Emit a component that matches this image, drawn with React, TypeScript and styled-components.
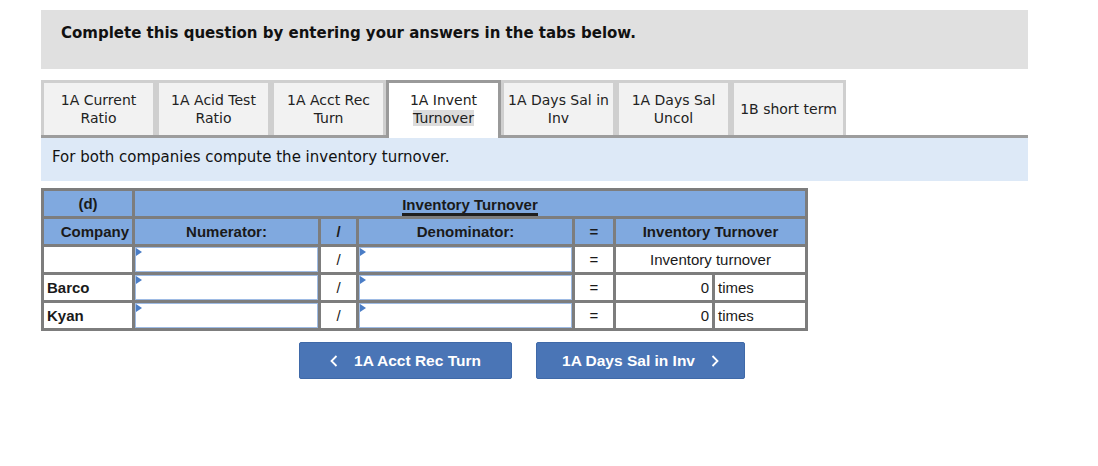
import { createGlobalStyle, styled } from "styled-components";

const GlobalStyle = createGlobalStyle`
  body {
    margin: 0;
    background: #ffffff;
    font-family: "DejaVu Sans", Verdana, sans-serif;
    color: #111;
  }
`;

const Page = styled.div`
  width: 987px;
  padding: 10px 0 0 41px;
`;

const Header = styled.div`
  height: 59px;
  box-sizing: border-box;
  padding: 14px 20px;
  background: #e0e0e0;
  font-size: 15px;
  line-height: 18px;
  font-weight: bold;
`;

const TabBar = styled.div`
  display: flex;
  margin-top: 11px;
  border-bottom: 3px solid #9d9d9d;
`;

const Tab = styled.div<{ $active?: boolean }>`
  width: 115px;
  box-sizing: border-box;
  border: 3px solid ${(p) => (p.$active ? "#9a9a9a" : "#cfcfcf")};
  border-bottom: none;
  background: ${(p) => (p.$active ? "#ffffff" : "#f2f2f2")};
  margin-bottom: ${(p) => (p.$active ? "-3px" : "0")};
  height: ${(p) => (p.$active ? "58px" : "55px")};
  padding-bottom: ${(p) => (p.$active ? "3px" : "0")};
  display: flex;
  align-items: center;
  justify-content: center;
  text-align: center;
  font-size: 14px;
  line-height: 18px;
  color: #222;
  white-space: nowrap;
`;

const Highlight = styled.span`
  background: #dcdcdc;
`;

const Info = styled.div`
  height: 43px;
  box-sizing: border-box;
  padding: 10px 11px;
  background: #dde9f7;
  font-size: 15px;
  line-height: 18px;
`;

const Grid = styled.div`
  margin-top: 7px;
  width: 767px;
  box-sizing: border-box;
  display: grid;
  grid-template-columns: 88px 183px 35px 213px 38px 96px 90px;
  grid-auto-rows: 25px;
  gap: 3px;
  padding: 3px;
  background: #7d7d7d;
  font-family: "Liberation Sans", Arial, sans-serif;
  font-size: 15px;
`;

const Cell = styled.div<{
  $head?: boolean;
  $span?: number;
  $align?: "left" | "center" | "right";
  $bold?: boolean;
}>`
  grid-column: span ${(p) => p.$span ?? 1};
  background: ${(p) => (p.$head ? "#80a9df" : "#ffffff")};
  display: flex;
  align-items: center;
  justify-content: ${(p) =>
    p.$align === "left" ? "flex-start" : p.$align === "right" ? "flex-end" : "center"};
  padding: 0 3px;
  font-weight: ${(p) => (p.$head || p.$bold ? "bold" : "normal")};
  color: #1a1a1a;
  white-space: nowrap;
`;

const Underlined = styled.span`
  border-bottom: 3px solid #1f1f1f;
  line-height: 17px;
  margin-top: 5px;
`;

const InputCell = styled.div`
  background: #ffffff;
  border: 1px solid #9ebbe4;
  position: relative;
  &::before {
    content: "";
    position: absolute;
    left: 0;
    top: 0;
    border-left: 6px solid #4a7dc6;
    border-top: 4px solid transparent;
    border-bottom: 4px solid transparent;
  }
`;

const Buttons = styled.div`
  display: flex;
  gap: 24px;
  margin: 11px 0 0 258px;
`;

const NavButton = styled.button<{ $w: number }>`
  width: ${(p) => p.$w}px;
  height: 37px;
  display: flex;
  align-items: center;
  justify-content: center;
  gap: 16px;
  background: #4a75b6;
  border: 1px solid #3f69a8;
  border-radius: 2px;
  color: #ffffff;
  font-family: "Liberation Sans", Arial, sans-serif;
  font-weight: bold;
  font-size: 15.5px;
  padding: 0;
`;

const Chevron = ({ dir }: { dir: "left" | "right" }) => (
  <svg width="8" height="12" viewBox="0 0 8 12">
    <polyline
      points={dir === "left" ? "6.5,1 1.5,6 6.5,11" : "1.5,1 6.5,6 1.5,11"}
      fill="none"
      stroke="#fff"
      strokeWidth="1.8"
    />
  </svg>
);

const tabs = [
  ["1A Current", "Ratio"],
  ["1A Acid Test", "Ratio"],
  ["1A Acct Rec", "Turn"],
  ["1A Invent", "Turnover"],
  ["1A Days Sal in", "Inv"],
  ["1A Days Sal", "Uncol"],
  ["1B short term"],
];

const rows = [
  { name: "Barco", value: "0" },
  { name: "Kyan", value: "0" },
];

export default function App() {
  return (
    <>
      <GlobalStyle />
      <Page>
        <Header>Complete this question by entering your answers in the tabs below.</Header>
        <TabBar>
          {tabs.map((t, i) => (
            <Tab key={i} $active={i === 3}>
              <div>
                {t[0]}
                {t[1] && <br />}
                {t[1] && (i === 3 ? <Highlight>{t[1]}</Highlight> : t[1])}
              </div>
            </Tab>
          ))}
        </TabBar>
        <Info>For both companies compute the inventory turnover.</Info>
        <Grid>
          <Cell $head>(d)</Cell>
          <Cell $head $span={6}>
            <Underlined>Inventory Turnover</Underlined>
          </Cell>

          <Cell $head $align="right">Company</Cell>
          <Cell $head>Numerator:</Cell>
          <Cell $head>/</Cell>
          <Cell $head>Denominator:</Cell>
          <Cell $head>=</Cell>
          <Cell $head $span={2}>Inventory Turnover</Cell>

          <Cell />
          <InputCell />
          <Cell>/</Cell>
          <InputCell />
          <Cell>=</Cell>
          <Cell $span={2}>Inventory turnover</Cell>

          {rows.map((r) => [
            <Cell key={r.name + "n"} $align="left" $bold>{r.name}</Cell>,
            <InputCell key={r.name + "a"} />,
            <Cell key={r.name + "s"}>/</Cell>,
            <InputCell key={r.name + "b"} />,
            <Cell key={r.name + "e"}>=</Cell>,
            <Cell key={r.name + "v"} $align="right">{r.value}</Cell>,
            <Cell key={r.name + "t"} $align="left">times</Cell>,
          ])}
        </Grid>
        <Buttons>
          <NavButton $w={213}>
            <Chevron dir="left" />
            1A Acct Rec Turn
          </NavButton>
          <NavButton $w={209}>
            1A Days Sal in Inv
            <Chevron dir="right" />
          </NavButton>
        </Buttons>
      </Page>
    </>
  );
}
